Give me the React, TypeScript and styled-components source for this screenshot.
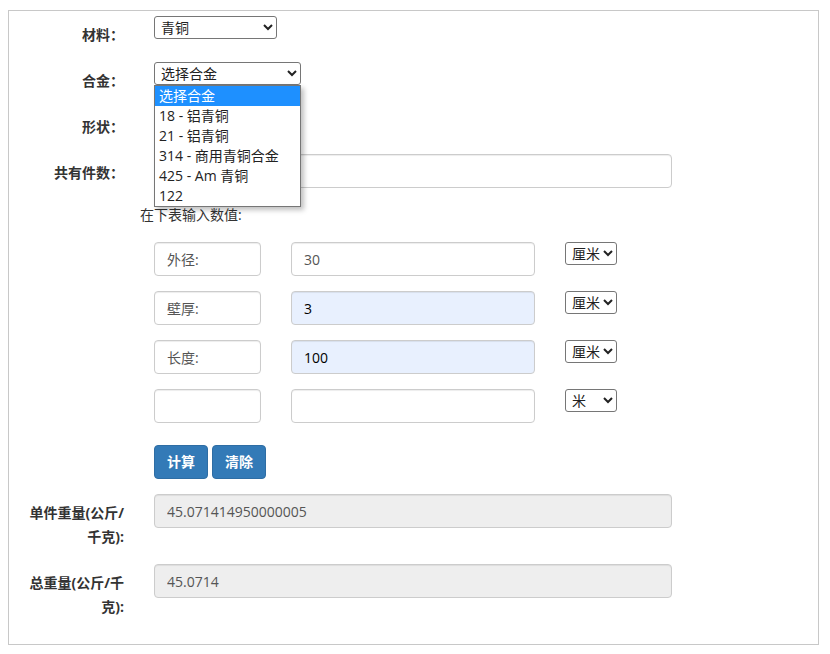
import { createGlobalStyle } from "styled-components";
import styled from "styled-components";

const GlobalStyle = createGlobalStyle`
  body {
    margin: 0;
    font-family: "Open Sans", "Noto Sans CJK SC", sans-serif;
    font-size: 14px;
    color: #333;
    background: #fff;
  }
`;

const alloys = [
  "选择合金",
  "18 - 铝青铜",
  "21 - 铝青铜",
  "314 - 商用青铜合金",
  "425 - Am 青铜",
  "122",
];

const dimensions = [
  { name: "外径:", value: "30", autofill: false, unit: "厘米" },
  { name: "壁厚:", value: "3", autofill: true, unit: "厘米" },
  { name: "长度:", value: "100", autofill: true, unit: "厘米" },
  { name: "", value: "", autofill: false, unit: "米" },
];

export default function App() {
  return (
    <Page>
      <GlobalStyle />
      <Panel>
        <FormRow>
          <Label>材料：</Label>
          <Select $width={123} defaultValue="青铜">
            <option>青铜</option>
            <option>黄铜</option>
          </Select>
        </FormRow>
        <FormRow>
          <Label>合金：</Label>
          <SelectWrap>
            <Select $width={147} defaultValue="选择合金">
              {alloys.map((a) => (
                <option key={a}>{a}</option>
              ))}
            </Select>
            <DropList>
              {alloys.map((a, i) => (
                <DropItem key={a} $active={i === 0}>
                  {a}
                </DropItem>
              ))}
            </DropList>
          </SelectWrap>
        </FormRow>
        <FormRow>
          <Label>形状：</Label>
          <Select $width={110} defaultValue="管">
            <option>管</option>
          </Select>
        </FormRow>
        <FormRow>
          <Label>共有件数：</Label>
          <TextInput $width={518} defaultValue="" />
        </FormRow>

        <Hint>在下表输入数值:</Hint>

        <Table>
          {dimensions.map((d, i) => (
            <TableRow key={i}>
              <TextInput $width={107} defaultValue={d.name} />
              <TextInput
                $width={244}
                $autofill={d.autofill}
                defaultValue={d.value}
              />
              <Select $width={52} defaultValue={d.unit}>
                <option>厘米</option>
                <option>米</option>
                <option>毫米</option>
              </Select>
            </TableRow>
          ))}
          <Buttons>
            <Button type="button">计算</Button>
            <Button type="button">清除</Button>
          </Buttons>
        </Table>

        <FormRow>
          <Label>单件重量(公斤/千克):</Label>
          <TextInput $width={518} readOnly defaultValue="45.071414950000005" />
        </FormRow>
        <FormRow>
          <Label>总重量(公斤/千克):</Label>
          <TextInput $width={518} readOnly defaultValue="45.0714" />
        </FormRow>
      </Panel>
    </Page>
  );
}

const Page = styled.div`
  padding: 10px 0 0 8px;
`;

const Panel = styled.div`
  width: 811px;
  box-sizing: border-box;
  border: 1px solid #c8c8c8;
  padding: 5px 0 10px;
`;

const FormRow = styled.div`
  display: flex;
  align-items: flex-start;
  gap: 30px;
  margin-bottom: 15px;
`;

const Label = styled.label`
  width: 100px;
  margin-left: 15px;
  padding-top: 7px;
  line-height: 24px;
  text-align: right;
  font-weight: bold;
  color: #333;
  flex-shrink: 0;
`;

const SelectWrap = styled.div`
  position: relative;
`;

const Select = styled.select<{ $width: number }>`
  width: ${(p) => p.$width}px;
  height: 23px;
  box-sizing: border-box;
  font-family: inherit;
  font-size: 14px;
  color: #222;
  background: #fff;
  border: 1px solid #767676;
  border-radius: 3px;
  padding: 0 0 0 2px;
`;

const DropList = styled.ul`
  position: absolute;
  top: 23px;
  left: 0;
  width: 147px;
  box-sizing: border-box;
  margin: 0;
  padding: 0;
  list-style: none;
  background: #fff;
  border: 1px solid #767676;
  box-shadow: 3px 3px 5px rgba(0, 0, 0, 0.25);
  z-index: 10;
`;

const DropItem = styled.li<{ $active?: boolean }>`
  height: 20px;
  line-height: 20px;
  padding-left: 4px;
  font-size: 14px;
  white-space: nowrap;
  color: ${(p) => (p.$active ? "#fff" : "#222")};
  background: ${(p) => (p.$active ? "#1e90ff" : "transparent")};
`;

const TextInput = styled.input<{ $width: number; $autofill?: boolean }>`
  width: ${(p) => p.$width}px;
  height: 34px;
  box-sizing: border-box;
  padding: 6px 12px;
  font-family: inherit;
  font-size: 14px;
  color: ${(p) => (p.$autofill ? "#000" : "#555")};
  background: ${(p) => (p.$autofill ? "#e8f0fe" : "#fff")};
  border: 1px solid #ccc;
  border-radius: 4px;
  box-shadow: inset 0 1px 1px rgba(0, 0, 0, 0.075);
  outline: none;

  &:read-only {
    background: #eee;
  }
`;

const Hint = styled.div`
  padding-left: 131px;
  line-height: 24px;
  margin-bottom: 15px;
`;

const Table = styled.div`
  margin-left: 145px;
`;

const TableRow = styled.div`
  display: flex;
  align-items: flex-start;
  gap: 30px;
  margin-bottom: 15px;
`;

const Buttons = styled.div`
  display: flex;
  gap: 4px;
  padding-top: 7px;
  margin-bottom: 15px;
`;

const Button = styled.button`
  height: 34px;
  padding: 6px 12px;
  font-family: inherit;
  font-size: 14px;
  font-weight: bold;
  line-height: 20px;
  color: #fff;
  background: #337ab7;
  border: 1px solid #2e6da4;
  border-radius: 4px;
  cursor: pointer;
`;
